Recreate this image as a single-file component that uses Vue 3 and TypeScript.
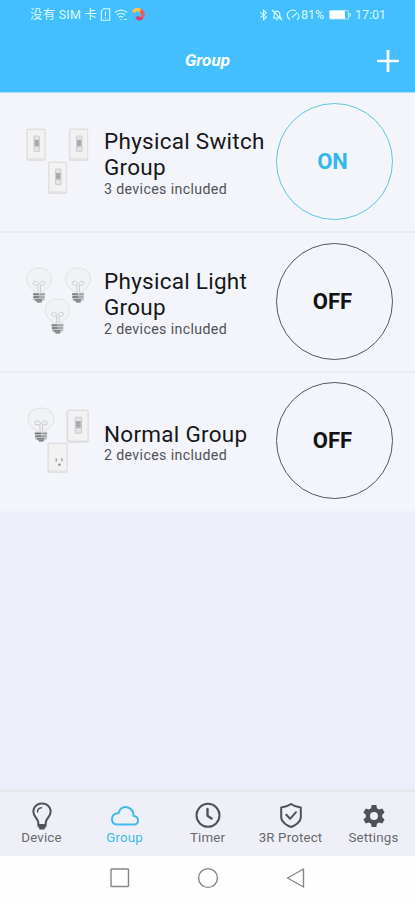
<script setup lang="ts">
import { ref } from 'vue'

type DeviceKind = 'switch' | 'bulb' | 'outlet'
interface DevicePicture {
  kind: DeviceKind
  x: number
  y: number
  width: number
  height: number
}
interface DeviceGroup {
  name: string
  count: number
  on: boolean
  pictures: DevicePicture[]
}

const groups = ref<DeviceGroup[]>([
  {
    name: 'Physical Switch Group',
    count: 3,
    on: true,
    pictures: [
      { kind: 'switch', x: 2, y: 3, width: 20, height: 33 },
      { kind: 'switch', x: 44.5, y: 3, width: 20, height: 33 },
      { kind: 'switch', x: 23.5, y: 36, width: 20, height: 33 },
    ],
  },
  {
    name: 'Physical Light Group',
    count: 2,
    on: false,
    pictures: [
      { kind: 'bulb', x: 2, y: 2, width: 26, height: 36 },
      { kind: 'bulb', x: 41, y: 2, width: 26, height: 36 },
      { kind: 'bulb', x: 20.5, y: 33, width: 26, height: 36 },
    ],
  },
  {
    name: 'Normal Group',
    count: 2,
    on: false,
    pictures: [
      { kind: 'bulb', x: 3.5, y: 3, width: 27, height: 35 },
      { kind: 'switch', x: 42, y: 5, width: 23, height: 34 },
      { kind: 'outlet', x: 23, y: 38, width: 21, height: 31 },
    ],
  },
])

const tabs = ['Device', 'Group', 'Timer', '3R Protect', 'Settings']
const activeTab = ref('Group')
</script>

<template>
  <div class="screen">
    <header class="header">
      <div class="status">
        <div class="status-left">
          <span class="carrier">没有 SIM 卡</span>
          <svg class="sim" viewBox="0 0 10 13"><path d="M3.2.7H9.2V12.3H.8V3.2Z M5 3.5V8 M5 9.2V10.5" /></svg>
          <svg class="wifi" viewBox="0 0 14 12"><path d="M.7 3.6Q7-1.4 13.3 3.6M2.8 6Q7 2.6 11.2 6M4.8 8.3Q7 6.5 9.2 8.3M7 10V11.3M10 10.5H13" /></svg>
          <svg class="app-mark" viewBox="0 0 13 13">
            <path d="M1.3 4.2Q5-.7 9 3.5" stroke="#ffc34a" />
            <path d="M8.5 2.2Q13 6 9.3 10.5" stroke="#f05c57" />
            <path d="M9.5 9.9Q6.7 12.2 4.7 8.7" stroke="#da3c78" />
          </svg>
        </div>
        <div class="status-right">
          <svg class="bluetooth" viewBox="0 0 8 12"><path d="M1 3.3L6.8 8.2L4 10.9V1.1L6.8 3.8L1 8.7" /></svg>
          <svg class="bell" viewBox="0 0 12 12"><path d="M2.5 9H9.8L8.8 7V5Q8.5 2.3 6 2.1Q4 2.2 3.3 4V7ZM5 10.8H7M1 1L11 11" /></svg>
          <svg class="gauge" viewBox="0 0 15 12"><path d="M4 10.7Q-.3 7.4 2 3.6Q5.4-.8 10 2.1M12 4.7Q14.5 8.5 11 10.7M6 8.5L11.4 3.5" /></svg>
          <span class="percent">81%</span>
          <svg class="battery" viewBox="0 0 22 10"><rect x=".5" y=".5" width="19" height="8.5" rx="1.2" fill="none" stroke="#a8e6ff" /><rect x="1" y=".8" width="15" height="8" fill="#fff" /><path d="M21 3V6.7" stroke="#e6fbff" /></svg>
          <span class="clock">17:01</span>
        </div>
      </div>
      <div class="title-bar">
        <h1>Group</h1>
        <button class="add" aria-label="Add group">
          <svg viewBox="0 0 22 22"><path d="M11 1V21M1 11H21" /></svg>
        </button>
      </div>
    </header>

    <main class="content">
      <article v-for="group in groups" :key="group.name" class="group">
        <svg class="pictures" viewBox="0 0 70 72">
          <svg
            v-for="(picture, index) in group.pictures"
            :key="index"
            :x="picture.x"
            :y="picture.y"
            :width="picture.width"
            :height="picture.height"
            :viewBox="picture.kind === 'bulb' ? '0 0 26 36' : '0 0 20 33'"
            preserveAspectRatio="none"
          >
            <g v-if="picture.kind === 'bulb'">
              <path d="M8.5 25Q8 23.4 5 21.2C-3 14.5 0 1 13 1S29 14.5 21 21.2Q18 23.4 17.5 25Z" fill="#f1f2f3" stroke="#dfe1e2" />
              <path d="M12 25V18M14.5 25V18M12 18Q6 19 7.5 15Q10 12.5 13.2 17.5Q16.5 12.5 18.5 15Q20 19 14.5 18" fill="none" stroke="#cdcecf" />
              <path d="M7.3 26H18.8V33L15.5 35H10.5L7.3 33Z" fill="#c3c6c8" />
              <path d="M7 27.2H13M7.4 30H13M9 32.8H16M11 34.8H15.5" stroke="#6a6e71" stroke-width="1.3" />
              <path d="M14 27H19M13 30H18.5" stroke="#8c9093" />
            </g>
            <g v-else>
              <rect x=".8" y="1" width="18.6" height="31.4" rx="1.5" fill="#e2e3e4" stroke="#d8d9da" stroke-width=".7" />
              <rect x="2" y="2" width="16.6" height="28.3" rx="1" fill="#f2f2f3" />
              <g v-if="picture.kind === 'switch'">
                <rect x="8" y="8" width="5.5" height="15.5" rx=".5" fill="#e3e4e5" stroke="#c4c6c8" stroke-width=".8" />
                <rect x="8.5" y="11.7" width="4.4" height="7" fill="#b3b5b7" />
                <path d="M8.9 13.5H12.5M8.9 16H12.5" stroke="#8d9092" stroke-width=".7" />
              </g>
              <g v-else>
                <path d="M8.8 17.5V20.8M14.2 17.3V20.5" stroke="#96999c" stroke-width="1.3" />
                <circle cx="11.8" cy="24.3" r="1.3" fill="#919599" />
              </g>
            </g>
          </svg>
        </svg>
        <div class="description">
          <h2>{{ group.name }}</h2>
          <p>{{ group.count }} devices included</p>
        </div>
        <button class="toggle" :class="{ on: group.on }" @click="group.on = !group.on">
          {{ group.on ? 'ON' : 'OFF' }}
        </button>
      </article>
    </main>

    <nav class="tabs">
      <button v-for="tab in tabs" :key="tab" :class="{ active: activeTab === tab }" @click="activeTab = tab">
        <svg viewBox="0 0 30 30">
          <g v-if="tab === 'Device'">
            <path d="M11.3 24V21.2Q10.8 18.8 8.4 16C3.7 9.5 8 2.5 15 2.5S26.3 9.5 21.6 16Q19.2 18.8 18.7 21.2V24Z" />
            <path d="M10.5 11Q10.5 7 14.5 6.7" stroke-width="1.5" />
            <path d="M11.5 25.6H18.5M13 27.5H17" />
          </g>
          <path v-else-if="tab === 'Group'" d="M7.2 23.5H23.5Q28 23.5 28 19.4Q28 15.5 23.6 15Q23.5 7.8 17.1 6.2Q10.5 5.2 8.5 12.3Q2 12.2 2 18Q2 23.5 7.2 23.5Z" />
          <g v-else-if="tab === 'Timer'"><circle cx="15" cy="14.3" r="11.5" /><path d="M14.5 8V14.8L18.5 17.5" stroke-width="2.4" /></g>
          <g v-else-if="tab === '3R Protect'"><path d="M15 3Q19 6 24.8 6.5V16.5C24.5 21.5 18.2 25 15 26C11.8 25 5.5 21.5 5.2 16.5V6.5Q11 6 15 3Z" /><path d="M10.3 13.8L14.1 17.8L20 11.2" /></g>
          <path v-else class="cog" fill-rule="evenodd" d="M12.7 4H17.3L18 7.2L20.1 8.4L23.3 7.4L25.6 11.4L23.2 13.7V16.3L25.6 18.6L23.3 22.6L20.1 21.6L18 22.8L17.3 26H12.7L12 22.8L9.9 21.6L6.7 22.6L4.4 18.6L6.8 16.3V13.7L4.4 11.4L6.7 7.4L9.9 8.4L12 7.2ZM19 15A4 4 0 1 0 11 15A4 4 0 1 0 19 15Z" />
        </svg>
        <span>{{ tab }}</span>
      </button>
    </nav>
    <footer class="system-nav">
      <svg viewBox="0 0 22 22"><rect x="2" y="2" width="17.5" height="17.5" rx=".7" /></svg>
      <svg viewBox="0 0 22 22"><circle cx="11" cy="11" r="9.4" /></svg>
      <svg viewBox="0 0 22 22"><path d="M18.5 2V20L2.5 11Z" /></svg>
    </footer>
  </div>
</template>

<style>
body {
  margin: 0;
}
</style>

<style scoped>
.screen {
  width: 415px;
  height: 900px;
  display: flex;
  flex-direction: column;
  overflow: hidden;
  background: #edeefa;
  color: #17181b;
  font-family: Roboto, "Noto Sans CJK SC", sans-serif;
}
.header {
  height: 92px;
  flex: none;
  background: #43bfff;
  border-bottom: 1px solid #a9def9;
  color: white;
}
.status {
  height: 29px;
  display: flex;
  align-items: center;
  justify-content: space-between;
  padding: 0 28px 0 30px;
  font-size: 12.5px;
  line-height: 15px;
  color: #d9f9ff;
}
.status-left, .status-right {
  display: flex;
  align-items: center;
}
.status svg {
  fill: none;
  stroke: #d5faff;
  stroke-width: 1.1;
}
.carrier { width: 70px; letter-spacing: .2px; white-space: nowrap; }
.sim { width: 11px; height: 13px; }
.wifi { width: 14px; height: 12px; margin-left: 3px; }
.app-mark { width: 13px; height: 13px; margin-left: 4px; }
.app-mark path { stroke-width: 3.5; }
.bluetooth { width: 9px; height: 12px; }
.bell { width: 12px; height: 12px; margin-left: 3px; }
.gauge { width: 15px; height: 12px; margin-left: 3px; }
.percent { width: 28px; }
.status .battery { width: 22px; height: 10px; stroke: none; }
.clock { width: 32px; margin-left: 4px; }
.title-bar {
  height: 63px;
  display: grid;
  grid-template-columns: 1fr auto 1fr;
  align-items: center;
  padding: 0 15px;
}
.title-bar h1 {
  grid-column: 2;
  margin: 0 0 2px;
  font-size: 17px;
  line-height: 20px;
  font-style: italic;
  font-weight: 700;
}
button { appearance: none; border: 0; background: none; padding: 0; font: inherit; }
.add { justify-self: end; width: 24px; height: 24px; }
.add svg { display: block; width: 24px; height: 24px; stroke: #fff; stroke-width: 2.5; }
.content { flex: 1; min-height: 0; }
.group {
  height: 139.8px;
  box-sizing: border-box;
  display: grid;
  grid-template-columns: 70px 173px 117px;
  column-gap: 5px;
  align-items: center;
  padding: 0 21px 2px 24px;
  background: #f4f5fa;
  box-shadow: inset 0 -2px #ebedf2;
}
.group:last-child { box-shadow: inset 0 -2px #f0f1fa; }
.pictures { width: 70px; height: 72px; margin-top: -2px; }
.description { padding-left: 5px; padding-top: 1px; }
h2 {
  max-width: 166px;
  margin: 0;
  font-size: 22.5px;
  line-height: 26.5px;
  font-weight: 400;
  letter-spacing: .27px;
}
p {
  margin: 0;
  color: #505257;
  font-size: 14.2px;
  line-height: 16px;
  letter-spacing: .36px;
}
.toggle {
  width: 117px;
  height: 117px;
  margin-top: -1px;
  margin-left: -1px;
  border: 1px solid #55565a;
  border-radius: 50%;
  font-size: 22px;
  font-weight: 700;
  line-height: 26px;
  padding: 1px 4px 0 0;
  color: #111214;
}
.toggle.on { color: #35b6ec; border-color: #5bc8dc; }
.tabs {
  height: 67px;
  flex: none;
  box-sizing: border-box;
  border-top: 3px solid #e9eaf0;
  display: grid;
  grid-template-columns: repeat(5, 1fr);
  background: #eff0f7;
}
.tabs button {
  display: flex;
  flex-direction: column;
  align-items: center;
  padding-top: 9px;
  color: #67686c;
  font-size: 13.3px;
  line-height: 14px;
  letter-spacing: .17px;
}
.tabs svg { width: 30px; height: 30px; fill: none; stroke: #505257; stroke-width: 2; stroke-linejoin: round; stroke-linecap: round; }
.tabs .cog { fill: #505257; stroke: none; }
.tabs .active { color: #40bae9; }
.tabs .active svg { stroke: #40bae9; }
.system-nav {
  height: 44px;
  flex: none;
  display: grid;
  grid-template-columns: repeat(3, 22px);
  justify-content: center;
  align-items: center;
  column-gap: 66px;
  background: #fdfefd;
}
.system-nav svg { width: 22px; height: 22px; fill: none; stroke: #858585; stroke-width: 1.4; stroke-linejoin: round; }
</style>
